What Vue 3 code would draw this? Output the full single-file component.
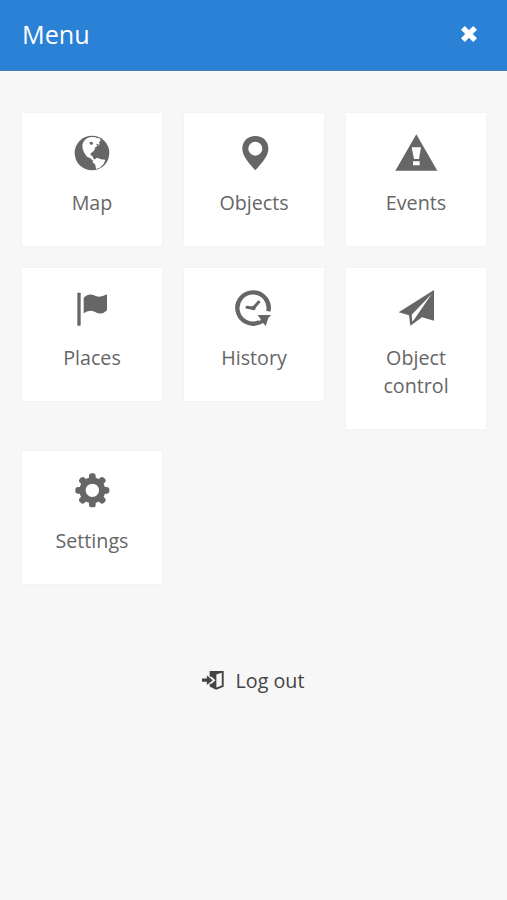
<script setup>
const items = ['Map', 'Objects', 'Events', 'Places', 'History', 'Object control', 'Settings']
const teeth = [0, 45, 90, 135, 180, 225, 270, 315]
</script>

<template>
  <main class="screen">
    <header class="bar">
      <h1>Menu</h1>
      <button class="close" aria-label="Close">
        <svg viewBox="0 0 20 20"><path d="M3.9 3.9 16.1 16.1M16.1 3.9 3.9 16.1" /></svg>
      </button>
    </header>

    <nav class="grid">
      <a v-for="item in items" :key="item" class="card">
        <svg class="icon" viewBox="0 0 180 165">
          <g v-if="item === 'Map'">
            <circle cx="90" cy="84" r="52" />
            <path class="cut" d="M64 51Q75 35 91 36Q101 35 104 39L113 40L116 47L111 51L113 58L106 63L100 67L97 76L91 82L86 85L86 91L92 93L93 99L100 106L94 108L85 100L75 95L67 84L62 72L61 60Z" />
            <path class="cut" d="M93 107L105 98L117 103L130 104L125 117L113 128L102 132L100 119L92 112Z" />
            <path d="M82 52L90 50L94 56L89 60L84 58ZM103 56L110 58L105 63Z" />
          </g>
          <path v-else-if="item === 'Objects'" fill-rule="evenodd" d="M94 33C71 33 55 49 55 71C55 95 77 116 94 136C111 116 133 95 133 71C133 49 117 33 94 33ZM94 50A21 21 0 1 1 94 92A21 21 0 1 1 94 50Z" />
          <g v-else-if="item === 'Events'">
            <path d="M91 28 154 137H28Z" />
            <path class="cut" d="M77 67H105L99 102H84ZM81 109H101V121H81Z" />
          </g>
          <g v-else-if="item === 'Places'">
            <rect x="46" y="38" width="10" height="99" rx="2" />
            <path d="M65 54Q78 38 96 46Q112 56 135 43V91Q119 108 98 95Q80 88 65 100Z" />
          </g>
          <g v-else-if="item === 'History'">
            <path class="ring" d="M106 127A47 47 0 1 1 133 94" />
            <path d="M101 105H141L133 114 125 138 117 129 106 134 100 127 111 119Z" />
            <path class="hands" d="M69 82 88 85 104 66" />
            <circle cx="88" cy="84" r="7" />
          </g>
          <g v-else-if="item === 'Object control'">
            <path d="M144 30V122L108 112 73 137 69 106 38 97Z" />
            <path class="cut" d="M137 42 77 104 79 125 86 116Z" />
          </g>
          <g v-else>
            <rect v-for="angle in teeth" :key="angle" x="81" y="31" width="20" height="25" rx="8" :transform="`rotate(${angle} 91 82)`" />
            <circle cx="91" cy="82" r="39" />
            <circle class="cut" cx="91" cy="82" r="20" />
          </g>
        </svg>
        <span class="label">{{ item }}</span>
      </a>
    </nav>

    <a class="logout">
      <svg viewBox="0 0 72 66">
        <path fill-rule="evenodd" d="M24 3H68V53L44 62 24 52V43H30L42 32 30 21H24ZM62 9 45 14V55L62 49Z" />
        <path d="M0 27H15V17L34 32 15 47V37H0Z" />
      </svg>
      <span>Log out</span>
    </a>
  </main>
</template>

<style>
body {
  background: #f7f7f7;
}
</style>

<style scoped>
.screen {
  box-sizing: border-box;
  min-height: 900px;
  background: #f7f7f7;
  font-family: "Open Sans", sans-serif;
  color: #666;
}
.bar {
  display: flex;
  align-items: center;
  justify-content: space-between;
  box-sizing: border-box;
  height: 71px;
  padding: 0 28px 2px 22px;
  background: #2b81d5;
  border-bottom: 1px solid #4380bd;
  color: #fff;
}
h1 {
  margin: 0;
  font-size: 25.2px;
  font-weight: 400;
  line-height: 34px;
}
.close {
  display: flex;
  padding: 0;
  border: 0;
  background: none;
}
.close svg {
  width: 20px;
  height: 20px;
  fill: none;
  stroke: #fff;
  stroke-width: 5.4;
}
.grid {
  display: grid;
  grid-template-columns: repeat(3, 140px);
  column-gap: 22px;
  row-gap: 21.5px;
  align-items: start;
  padding: 42px 21px 0 22px;
}
.card {
  display: flex;
  flex-direction: column;
  align-items: center;
  gap: 9px;
  padding: 12px 24px 29.3px;
  background: #fff;
  box-shadow: 0 0 3px rgba(0, 0, 0, 0.04);
}
.icon {
  width: 60px;
  height: 55px;
  fill: #666;
}
.cut {
  fill: #fff;
}
.ring,
.hands {
  fill: none;
  stroke: #666;
}
.ring {
  stroke-width: 13;
}
.hands {
  stroke-width: 9;
  stroke-linecap: round;
}
.label {
  font-size: 19.7px;
  line-height: 28px;
  text-align: center;
}
.logout {
  display: flex;
  align-items: center;
  justify-content: center;
  gap: 11px;
  margin-top: 83px;
  padding-right: 1px;
  color: #444;
  font-size: 19.7px;
  line-height: 28px;
}
.logout svg {
  width: 23px;
  height: 21px;
  margin-bottom: 1px;
  fill: #444;
}
</style>
